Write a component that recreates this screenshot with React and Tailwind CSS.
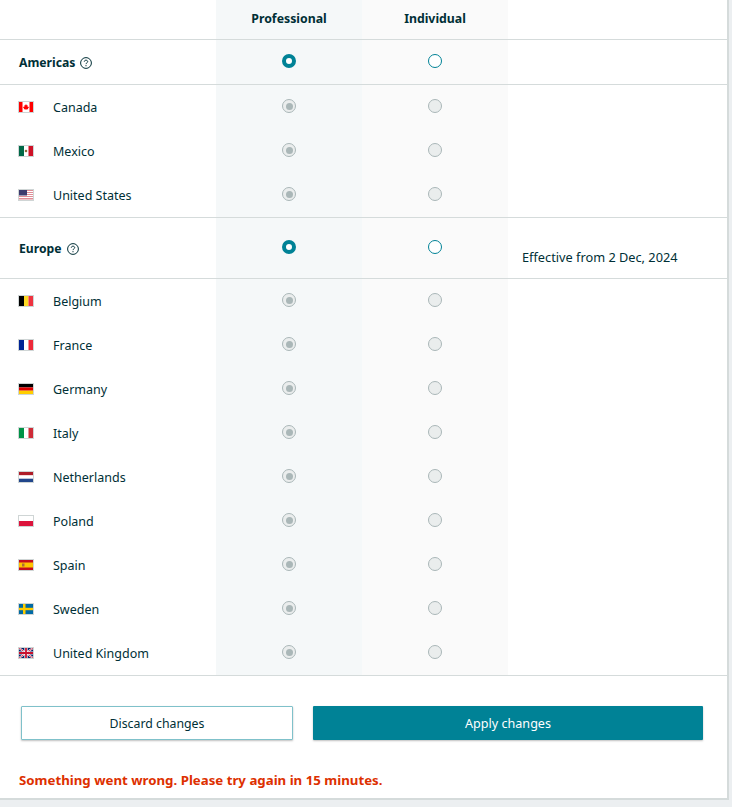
import React from 'react';

const Flag = ({ children }) => (
    <svg viewBox="0 0 16 12" className="h-3 w-4 shrink-0">
        {children}
        <rect x="0.5" y="0.5" width="15" height="11" fill="none" stroke="#cfd5d5" />
    </svg>
);

const vertical = (a, b, c) => (
    <>
        <rect x="1" y="1" width="5" height="10" fill={a} />
        <rect x="6" y="1" width="4.5" height="10" fill={b} />
        <rect x="10.5" y="1" width="4.5" height="10" fill={c} />
    </>
);

const horizontal = (a, b, c) => (
    <>
        <rect x="1" y="1" width="14" height="3.4" fill={a} />
        <rect x="1" y="4.4" width="14" height="3.3" fill={b} />
        <rect x="1" y="7.7" width="14" height="3.3" fill={c} />
    </>
);

const flags = {
    Canada: (
        <>
            <rect x="1" y="1" width="14" height="10" fill="#fff" />
            <rect x="1" y="1" width="3.5" height="10" fill="#ff0000" />
            <rect x="11.5" y="1" width="3.5" height="10" fill="#ff0000" />
            <path d="M8 3l.7 1.2.9-.3-.3 1.7.9-.2.3.8.7.2-1.3 1.2.2.7H8.300V9h-.6V8.300H5.900l.2-.7L4.800 6.400l.7-.2.3-.8.9.2-.3-1.700.9.3z" fill="#f00" />
        </>
    ),
    Mexico: (
        <>
            {vertical('#006847', '#ffffff', '#ce1126')}
            <circle cx="8" cy="6" r="1.300" fill="#8c6a3c" />
        </>
    ),
    'United States': (
        <>
            <rect x="1" y="1" width="14" height="10" fill="#fff" />
            <rect x="1" y="1" width="14" height="1" fill="#e08c96" />
            <rect x="1" y="3" width="14" height="1" fill="#e08c96" />
            <rect x="1" y="5" width="14" height="1" fill="#e08c96" />
            <rect x="1" y="7" width="14" height="1" fill="#e08c96" />
            <rect x="1" y="9" width="14" height="1.500" fill="#e08c96" />
            <rect x="1" y="1" width="8" height="5.500" fill="#3c3b6e" />
        </>
    ),
    Belgium: vertical('#000000', '#fdda24', '#ef3340'),
    France: vertical('#002395', '#ffffff', '#ed2939'),
    Germany: horizontal('#000000', '#dd0000', '#ffce00'),
    Italy: vertical('#009246', '#ffffff', '#ce2b37'),
    Netherlands: horizontal('#ae1c28', '#ffffff', '#21468b'),
    Poland: (
        <>
            <rect x="1" y="1" width="14" height="5" fill="#ffffff" />
            <rect x="1" y="6" width="14" height="5" fill="#dc143c" />
        </>
    ),
    Spain: (
        <>
            <rect x="1" y="1" width="14" height="10" fill="#c60b1e" />
            <rect x="1" y="3.500" width="14" height="5" fill="#ffc400" />
            <rect x="4" y="4.500" width="2.500" height="3" fill="#ad6b3a" />
        </>
    ),
    Sweden: (
        <>
            <rect x="1" y="1" width="14" height="10" fill="#006aa7" />
            <rect x="5" y="1" width="2.500" height="10" fill="#fecc00" />
            <rect x="1" y="4.800" width="14" height="2.400" fill="#fecc00" />
        </>
    ),
    'United Kingdom': (
        <>
            <rect x="1" y="1" width="14" height="10" fill="#012169" />
            <path d="M1 1l14 10M15 1L1 11" stroke="#fff" strokeWidth="2" />
            <path d="M1 1l14 10M15 1L1 11" stroke="#c8102e" strokeWidth="0.800" />
            <path d="M8 1v10M1 6h14" stroke="#fff" strokeWidth="3.200" />
            <path d="M8 1v10M1 6h14" stroke="#c8102e" strokeWidth="1.800" />
        </>
    ),
};

const HelpIcon = () => (
    <svg viewBox="0 0 12 12" className="h-3 w-3" fill="none" stroke="#002f36">
        <circle cx="6" cy="6" r="5.400" strokeWidth="1" />
        <path d="M4.300 4.700c0-1 .8-1.500 1.700-1.500s1.700.6 1.700 1.400c0 1.200-1.700 1.300-1.700 2.500" strokeWidth="1" />
        <circle cx="6" cy="8.700" r="0.600" fill="#002f36" stroke="none" />
    </svg>
);

const Radio = ({ type }) => {
    if (type === 'checked') {
        return <span className="block h-3.5 w-3.5 rounded-full border-[4px] border-[#008296] bg-white" />;
    }
    if (type === 'open') {
        return <span className="block h-3.5 w-3.5 rounded-full border border-[#008296] bg-white" />;
    }
    if (type === 'disabledChecked') {
        return (
            <span className="flex h-3.5 w-3.5 items-center justify-center rounded-full border border-[#aab7b8] bg-[#eaeded]">
                <span className="block h-[7px] w-[7px] rounded-full bg-[#aab7b8]" />
            </span>
        );
    }
    return <span className="block h-3.5 w-3.5 rounded-full border border-[#aab7b8] bg-[#eaeded]" />;
};

const RegionRow = ({ name, height, radioClass, note }) => (
    <div className={`grid grid-cols-[216px_146px_146px_1fr] border-b border-[#d5dbdb] ${height}`}>
        <div className="flex items-center gap-[5px] pl-[19px] pt-0.5 text-[12.2px] font-bold">
            {name}
            <HelpIcon />
        </div>
        <div className={`flex justify-center bg-[#f5f8f9] ${radioClass}`}>
            <Radio type="checked" />
        </div>
        <div className={`flex justify-center bg-[#fafafa] ${radioClass}`}>
            <Radio type="open" />
        </div>
        <div className="pl-3.5 pt-[29px] text-[12.75px] leading-5">{note}</div>
    </div>
);

const CountryRow = ({ name }) => (
    <div className="grid h-11 grid-cols-[216px_146px_146px_1fr]">
        <div className="flex items-center gap-[19px] pl-[18px] text-[12.5px]">
            <Flag>{flags[name]}</Flag>
            <span className="mt-0.5">{name}</span>
        </div>
        <div className="flex items-center justify-center bg-[#f5f8f9] pb-0.5">
            <Radio type="disabledChecked" />
        </div>
        <div className="flex items-center justify-center bg-[#fafafa] pb-0.5">
            <Radio type="disabled" />
        </div>
        <div />
    </div>
);

const App = () => {
    const americas = ['Canada', 'Mexico', 'United States'];
    const europe = ['Belgium', 'France', 'Germany', 'Italy', 'Netherlands', 'Poland', 'Spain', 'Sweden', 'United Kingdom'];

    return (
        <div className="h-[807px] overflow-hidden bg-[#eceff1] font-['Noto_Sans',sans-serif] text-[#002f36]">
            <div className="h-[800px] w-[729px] border-r-2 border-b-2 border-[#d5dbdb] bg-white">
                <div className="grid h-10 grid-cols-[216px_146px_146px_1fr] border-b border-[#d5dbdb] text-[12.3px] font-bold">
                    <div />
                    <div className="flex items-center justify-center bg-[#f5f8f9]">Professional</div>
                    <div className="flex items-center justify-center bg-[#fafafa]">Individual</div>
                    <div />
                </div>
                <RegionRow name="Americas" height="h-[45px]" radioClass="pt-[14px]" />
                <div className="border-b border-[#d5dbdb]">
                    {americas.map((name) => <CountryRow key={name} name={name} />)}
                </div>
                <RegionRow name="Europe" height="h-[61px]" radioClass="pt-[22px]" note="Effective from 2 Dec, 2024" />
                <div className="border-b border-[#d5dbdb]">
                    {europe.map((name) => <CountryRow key={name} name={name} />)}
                </div>
                <div className="flex gap-5 pl-[21px] pt-[30px]">
                    <button type="button" className="h-[34px] w-[272px] rounded-[1px] border border-[#7fc1ca] bg-white pt-0.5 text-[12.3px] shadow-[0_1px_2px_rgba(0,0,0,0.25)]">
                        Discard changes
                    </button>
                    <button type="button" className="h-[34px] w-[390px] rounded-[1px] bg-[#008296] pt-0.5 text-[12.6px] text-white shadow-[0_1px_2px_rgba(0,0,0,0.25)]">
                        Apply changes
                    </button>
                </div>
                <p className="pl-[19px] pt-[30px] text-[13.25px] leading-5 font-bold text-[#dd3000]">
                    Something went wrong. Please try again in 15 minutes.
                </p>
            </div>
        </div>
    );
};

export default App;
